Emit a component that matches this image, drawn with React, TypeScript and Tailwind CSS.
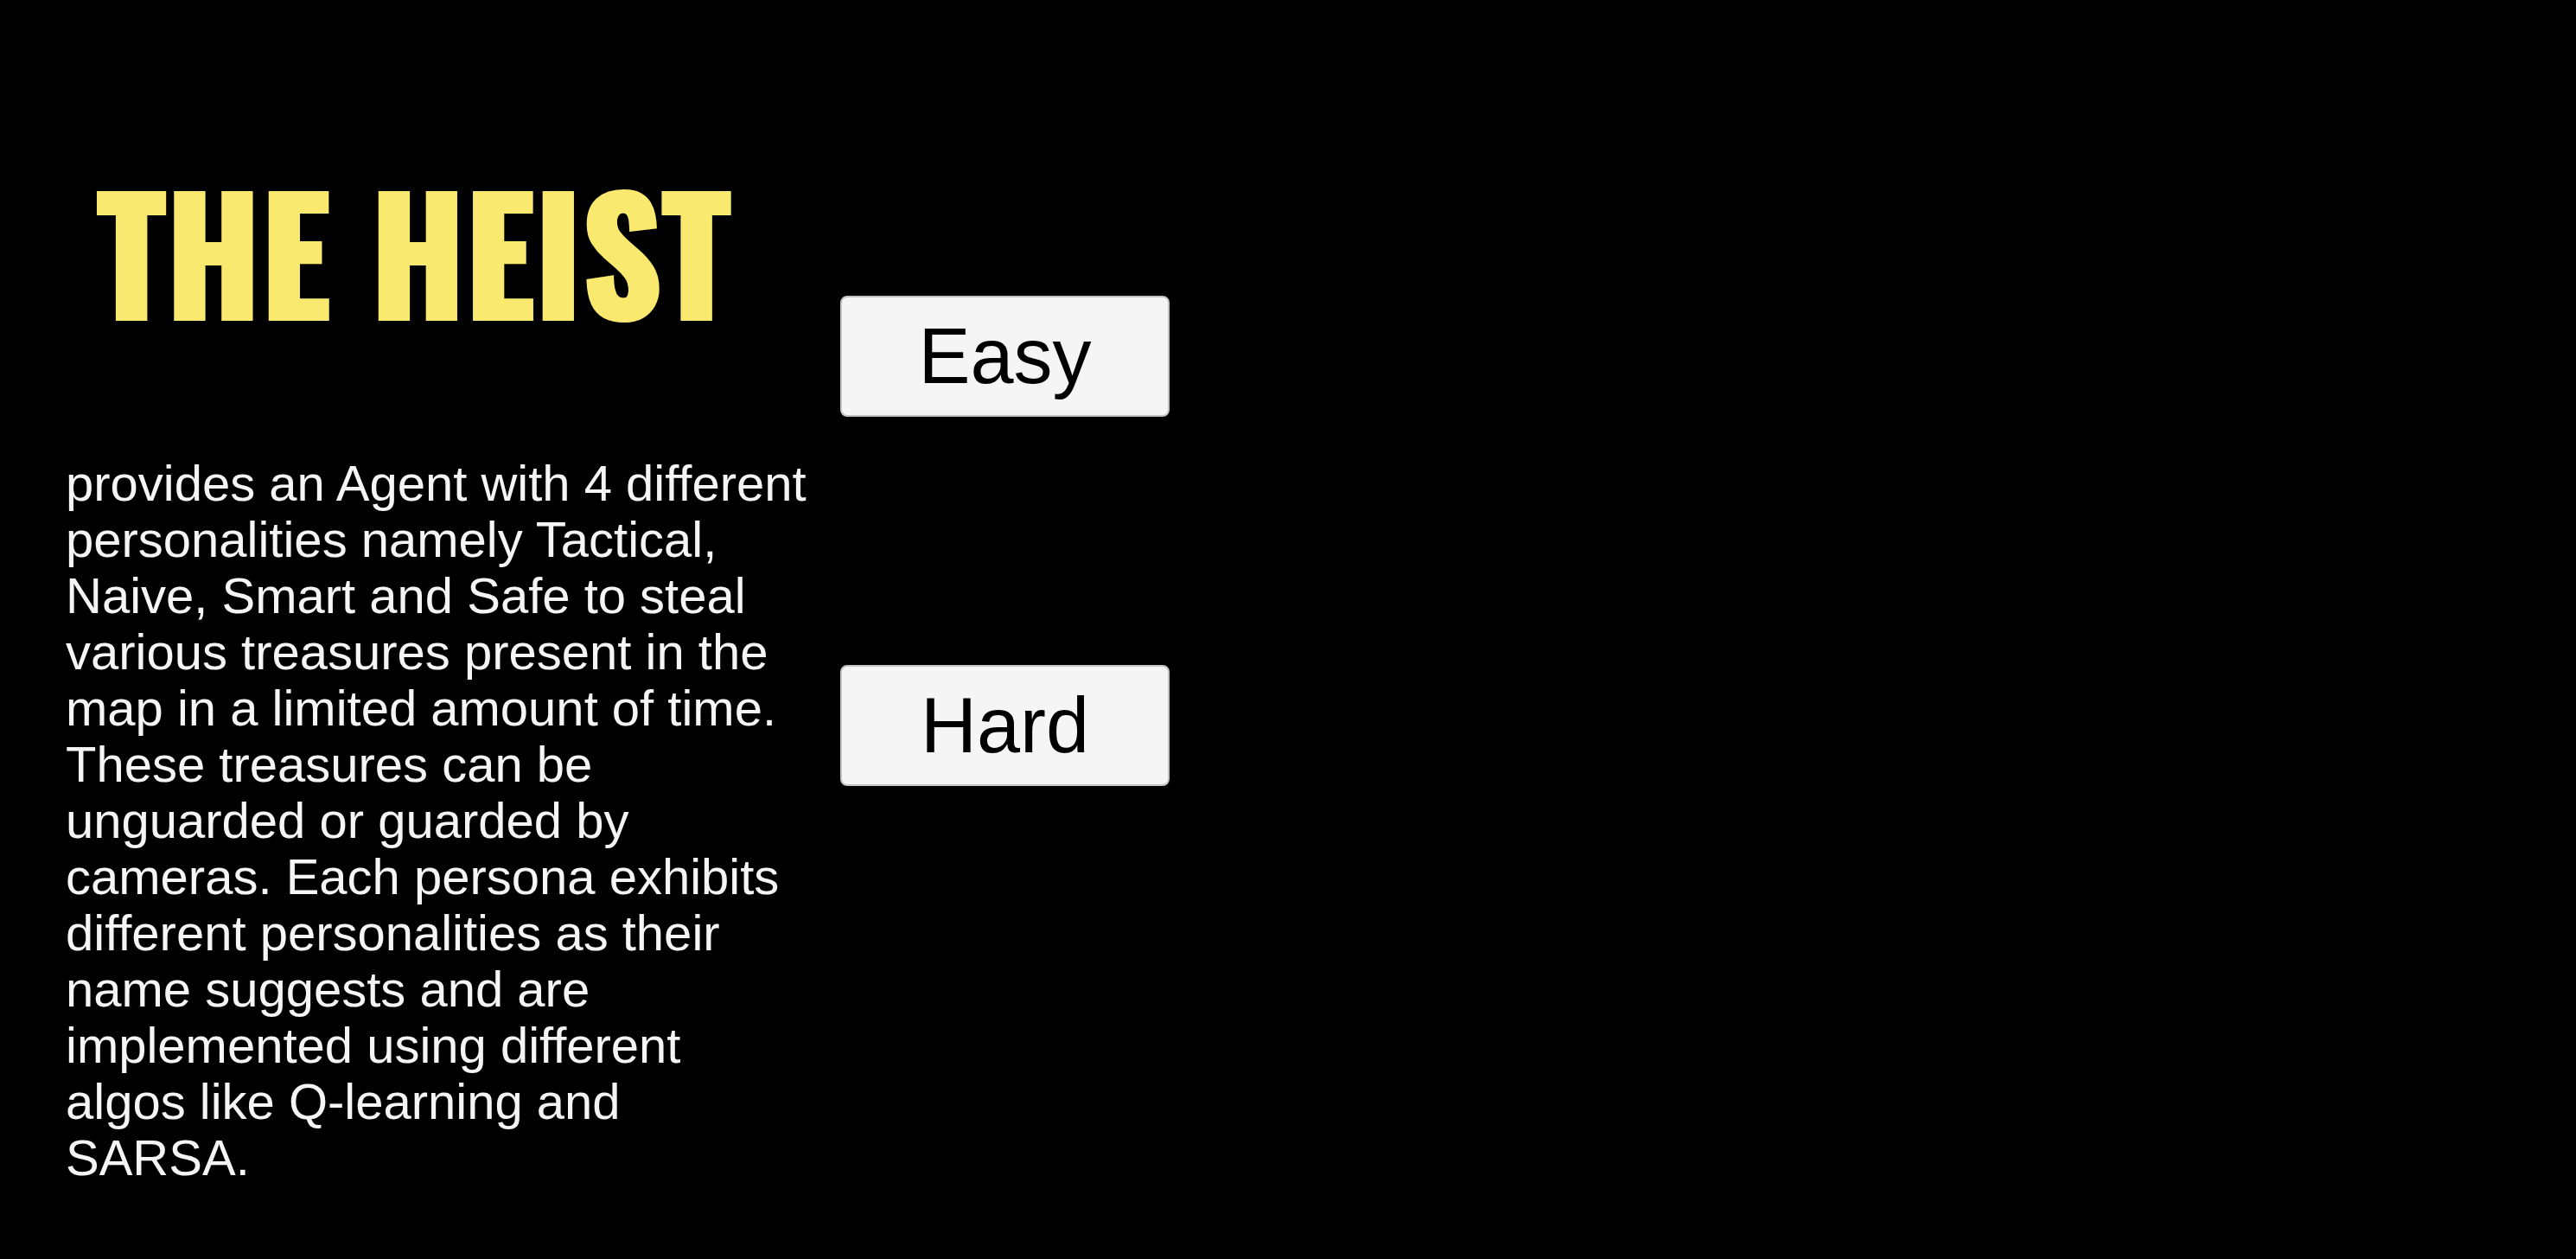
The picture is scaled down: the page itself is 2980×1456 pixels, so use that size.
const intro = [
  'provides an Agent with 4 different',
  'personalities namely Tactical,',
  'Naive, Smart and Safe to steal',
  'various treasures present in the',
  'map in a limited amount of time.',
  'These treasures can be',
  'unguarded or guarded by',
  'cameras. Each persona exhibits',
  'different personalities as their',
  'name suggests and are',
  'implemented using different',
  'algos like Q-learning and',
  'SARSA.',
];

function ModeButton({ label }: { label: string }) {
  return (
    <button
      type="button"
      className="h-[140px] w-full cursor-pointer rounded-lg border-2 border-[#c4c4c4] bg-[#f5f5f5] text-[90px] leading-none text-black"
    >
      {label}
    </button>
  );
}

export default function App() {
  return (
    <main className="flex min-h-screen items-start bg-black font-['Liberation_Sans',Arial,sans-serif]">
      <section className="w-[972px] shrink-0 pt-[180px] pl-[76px]">
        <h1 className="pl-9 font-['Oswald','Roboto_Condensed',sans-serif] text-[180px] leading-[216px] font-bold whitespace-nowrap text-[#f9e96e] [-webkit-text-stroke:4px_#f9e96e]">
          THE HEIST
        </h1>
        <p className="mt-[130px] text-[58px] leading-[65px] text-[#f5f5f5]">
          {intro.map((line) => (
            <span key={line} className="block whitespace-nowrap">
              {line}
            </span>
          ))}
        </p>
      </section>
      <nav aria-label="Difficulty" className="flex w-[381px] shrink-0 flex-col gap-[287px] pt-[342px]">
        <ModeButton label="Easy" />
        <ModeButton label="Hard" />
      </nav>
    </main>
  );
}
